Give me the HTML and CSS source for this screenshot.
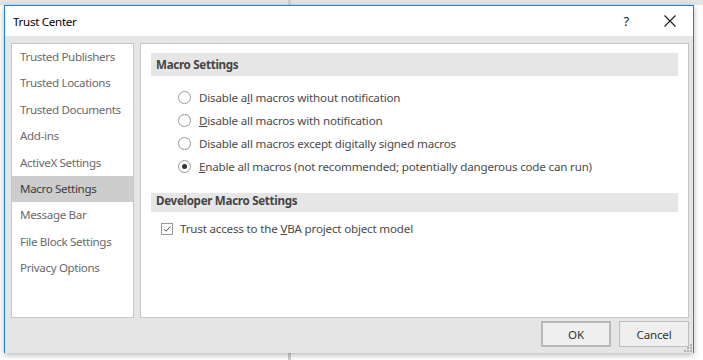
FILE: index.html
```html
<!DOCTYPE html>
<html>
<head>
<meta charset="utf-8">
<title>Trust Center</title>
<link rel="stylesheet" href="styles.css">
</head>
<body>
<div class="backdrop-strip"></div>
<div class="backdrop-divider"></div>
<div class="dialog">
  <div class="titlebar">
    <span class="title">Trust Center</span>
    <span class="help">?</span>
    <span class="close"><svg width="12" height="12" viewBox="0 0 12 12"><path d="M0.5 0.5L11.5 11.5M11.5 0.5L0.5 11.5" stroke="#1a1a1a" stroke-width="1.1" fill="none"/></svg></span>
  </div>
  <div class="body">
    <div class="main">
      <ul class="nav">
        <li class="nav-item">Trusted Publishers</li>
        <li class="nav-item">Trusted Locations</li>
        <li class="nav-item">Trusted Documents</li>
        <li class="nav-item">Add-ins</li>
        <li class="nav-item">ActiveX Settings</li>
        <li class="nav-item selected">Macro Settings</li>
        <li class="nav-item">Message Bar</li>
        <li class="nav-item">File Block Settings</li>
        <li class="nav-item">Privacy Options</li>
      </ul>
      <div class="content">
        <div class="section-head">Macro Settings</div>
        <div class="options">
          <div class="opt"><span class="radio"></span><span>Disable a<u>l</u>l macros without notification</span></div>
          <div class="opt"><span class="radio"></span><span><u>D</u>isable all macros with notification</span></div>
          <div class="opt"><span class="radio"></span><span>Disable all macros except digitally signed macros</span></div>
          <div class="opt"><span class="radio checked"></span><span><u>E</u>nable all macros (not recommended; potentially dangerous code can run)</span></div>
        </div>
        <div class="section-head dev">Developer Macro Settings</div>
        <div class="check-row">
          <span class="checkbox"><svg width="12" height="12" viewBox="0 0 12 12"><path d="M2.5 6.2L5 8.7L9.8 3" stroke="#444" stroke-width="1.1" fill="none"/></svg></span>
          <span>Trust access to the <u>V</u>BA project object model</span>
        </div>
      </div>
    </div>
    <div class="footer">
      <button class="btn default">OK</button>
      <button class="btn">Cancel</button>
    </div>
    <div class="grip">
      <span class="dot d1"></span><span class="dot d2"></span><span class="dot d3"></span>
      <span class="dot d4"></span><span class="dot d5"></span><span class="dot d6"></span>
    </div>
  </div>
</div>
</body>
</html>
```
FILE: styles.css
```css
html, body {
  margin: 0;
  padding: 0;
}
body {
  background: #ffffff;
  width: 703px;
  height: 360px;
  overflow: hidden;
  position: relative;
  font-family: "Noto Sans", "Segoe UI", sans-serif;
  font-size: 11.6px;
  letter-spacing: -0.18px;
}
.backdrop-strip {
  position: absolute;
  left: 0;
  top: 0;
  width: 703px;
  height: 5px;
  background: #e3e3e3;
}
.backdrop-divider {
  position: absolute;
  left: 288px;
  top: 0;
  width: 3px;
  height: 360px;
  background: #cfcfcf;
}
.dialog {
  position: relative;
  margin: 5px 0 0 4px;
  width: 690px;
  height: 348px;
  box-sizing: border-box;
  border: 1px solid #1883d7;
  border-bottom: none;
  background: #e5e5e5;
  box-shadow: 0 2px 6px rgba(0,0,0,0.28);
  display: flex;
  flex-direction: column;
}
.titlebar {
  height: 30px;
  background: #ffffff;
  display: flex;
  align-items: center;
  padding-left: 8px;
  color: #000;
}
.title {
  font-size: 11.6px;
  letter-spacing: -0.3px;
}
.help {
  margin-left: auto;
  margin-right: 35px;
  font-size: 13px;
  color: #1a1a1a;
}
.close {
  display: flex;
  margin-right: 17px;
}
.body {
  flex: 1;
  padding: 7px 4px 0 6px;
  display: flex;
  flex-direction: column;
  position: relative;
}
.main {
  display: flex;
  gap: 6px;
  height: 275px;
}
.nav {
  list-style: none;
  margin: 0;
  padding: 0;
  width: 123px;
  box-sizing: border-box;
  border: 1px solid #c6c6c6;
  background: #ffffff;
}
.nav-item {
  height: 26.375px;
  line-height: 26px;
  padding-left: 8px;
  color: #6a6a6a;
  white-space: nowrap;
  letter-spacing: -0.35px;
}
.nav-item.selected {
  background: #cdcdcd;
  color: #3c3c3c;
}
.content {
  flex: 1;
  box-sizing: border-box;
  border: 1px solid #c6c6c6;
  background: #ffffff;
  padding: 9px 10px 0 10px;
}
.section-head {
  height: 23px;
  line-height: 23px;
  background: #e6e6e6;
  padding-left: 5px;
  font-weight: bold;
  color: #444444;
  letter-spacing: -0.3px;
}
.section-head.dev {
  margin-top: 15px;
  height: 19px;
  line-height: 16px;
}
.options {
  padding-top: 10px;
}
.opt {
  height: 23px;
  display: flex;
  align-items: center;
  padding-left: 27px;
  color: #4a4a4a;
  white-space: nowrap;
}
.radio {
  width: 13px;
  height: 13px;
  box-sizing: border-box;
  border: 1px solid #9a9a9a;
  border-radius: 50%;
  margin-right: 8px;
  display: flex;
  align-items: center;
  justify-content: center;
  background: #fff;
}
.radio.checked::after {
  content: "";
  width: 5px;
  height: 5px;
  border-radius: 50%;
  background: #333;
}
.check-row {
  margin-top: 5px;
  height: 23px;
  display: flex;
  align-items: center;
  padding-left: 10px;
  color: #4a4a4a;
  white-space: nowrap;
}
.checkbox {
  width: 12px;
  height: 12px;
  box-sizing: border-box;
  border: 1px solid #9a9a9a;
  margin-right: 7px;
  display: flex;
  align-items: center;
  justify-content: center;
  background: #fff;
}
.checkbox svg {
  width: 10px;
  height: 10px;
}
.footer {
  margin-top: 3px;
  display: flex;
  justify-content: flex-end;
  gap: 8px;
}
.btn {
  width: 70px;
  height: 26px;
  box-sizing: border-box;
  border: 1px solid #bdbdbd;
  background: #efefef;
  font-family: "Noto Sans", "Segoe UI", sans-serif;
  font-size: 11.6px;
  letter-spacing: -0.18px;
  color: #333;
  padding: 0;
}
.btn.default {
  border: 2px solid #b8b8b8;
}
.grip {
  position: absolute;
  right: 1px;
  bottom: 1px;
  width: 9px;
  height: 9px;
}
.dot {
  position: absolute;
  width: 2px;
  height: 2px;
  background: #b0b0b0;
}
.d1 { right: 0; bottom: 0; }
.d2 { right: 3px; bottom: 0; }
.d3 { right: 6px; bottom: 0; }
.d4 { right: 0; bottom: 3px; }
.d5 { right: 3px; bottom: 3px; }
.d6 { right: 0; bottom: 6px; }
```
